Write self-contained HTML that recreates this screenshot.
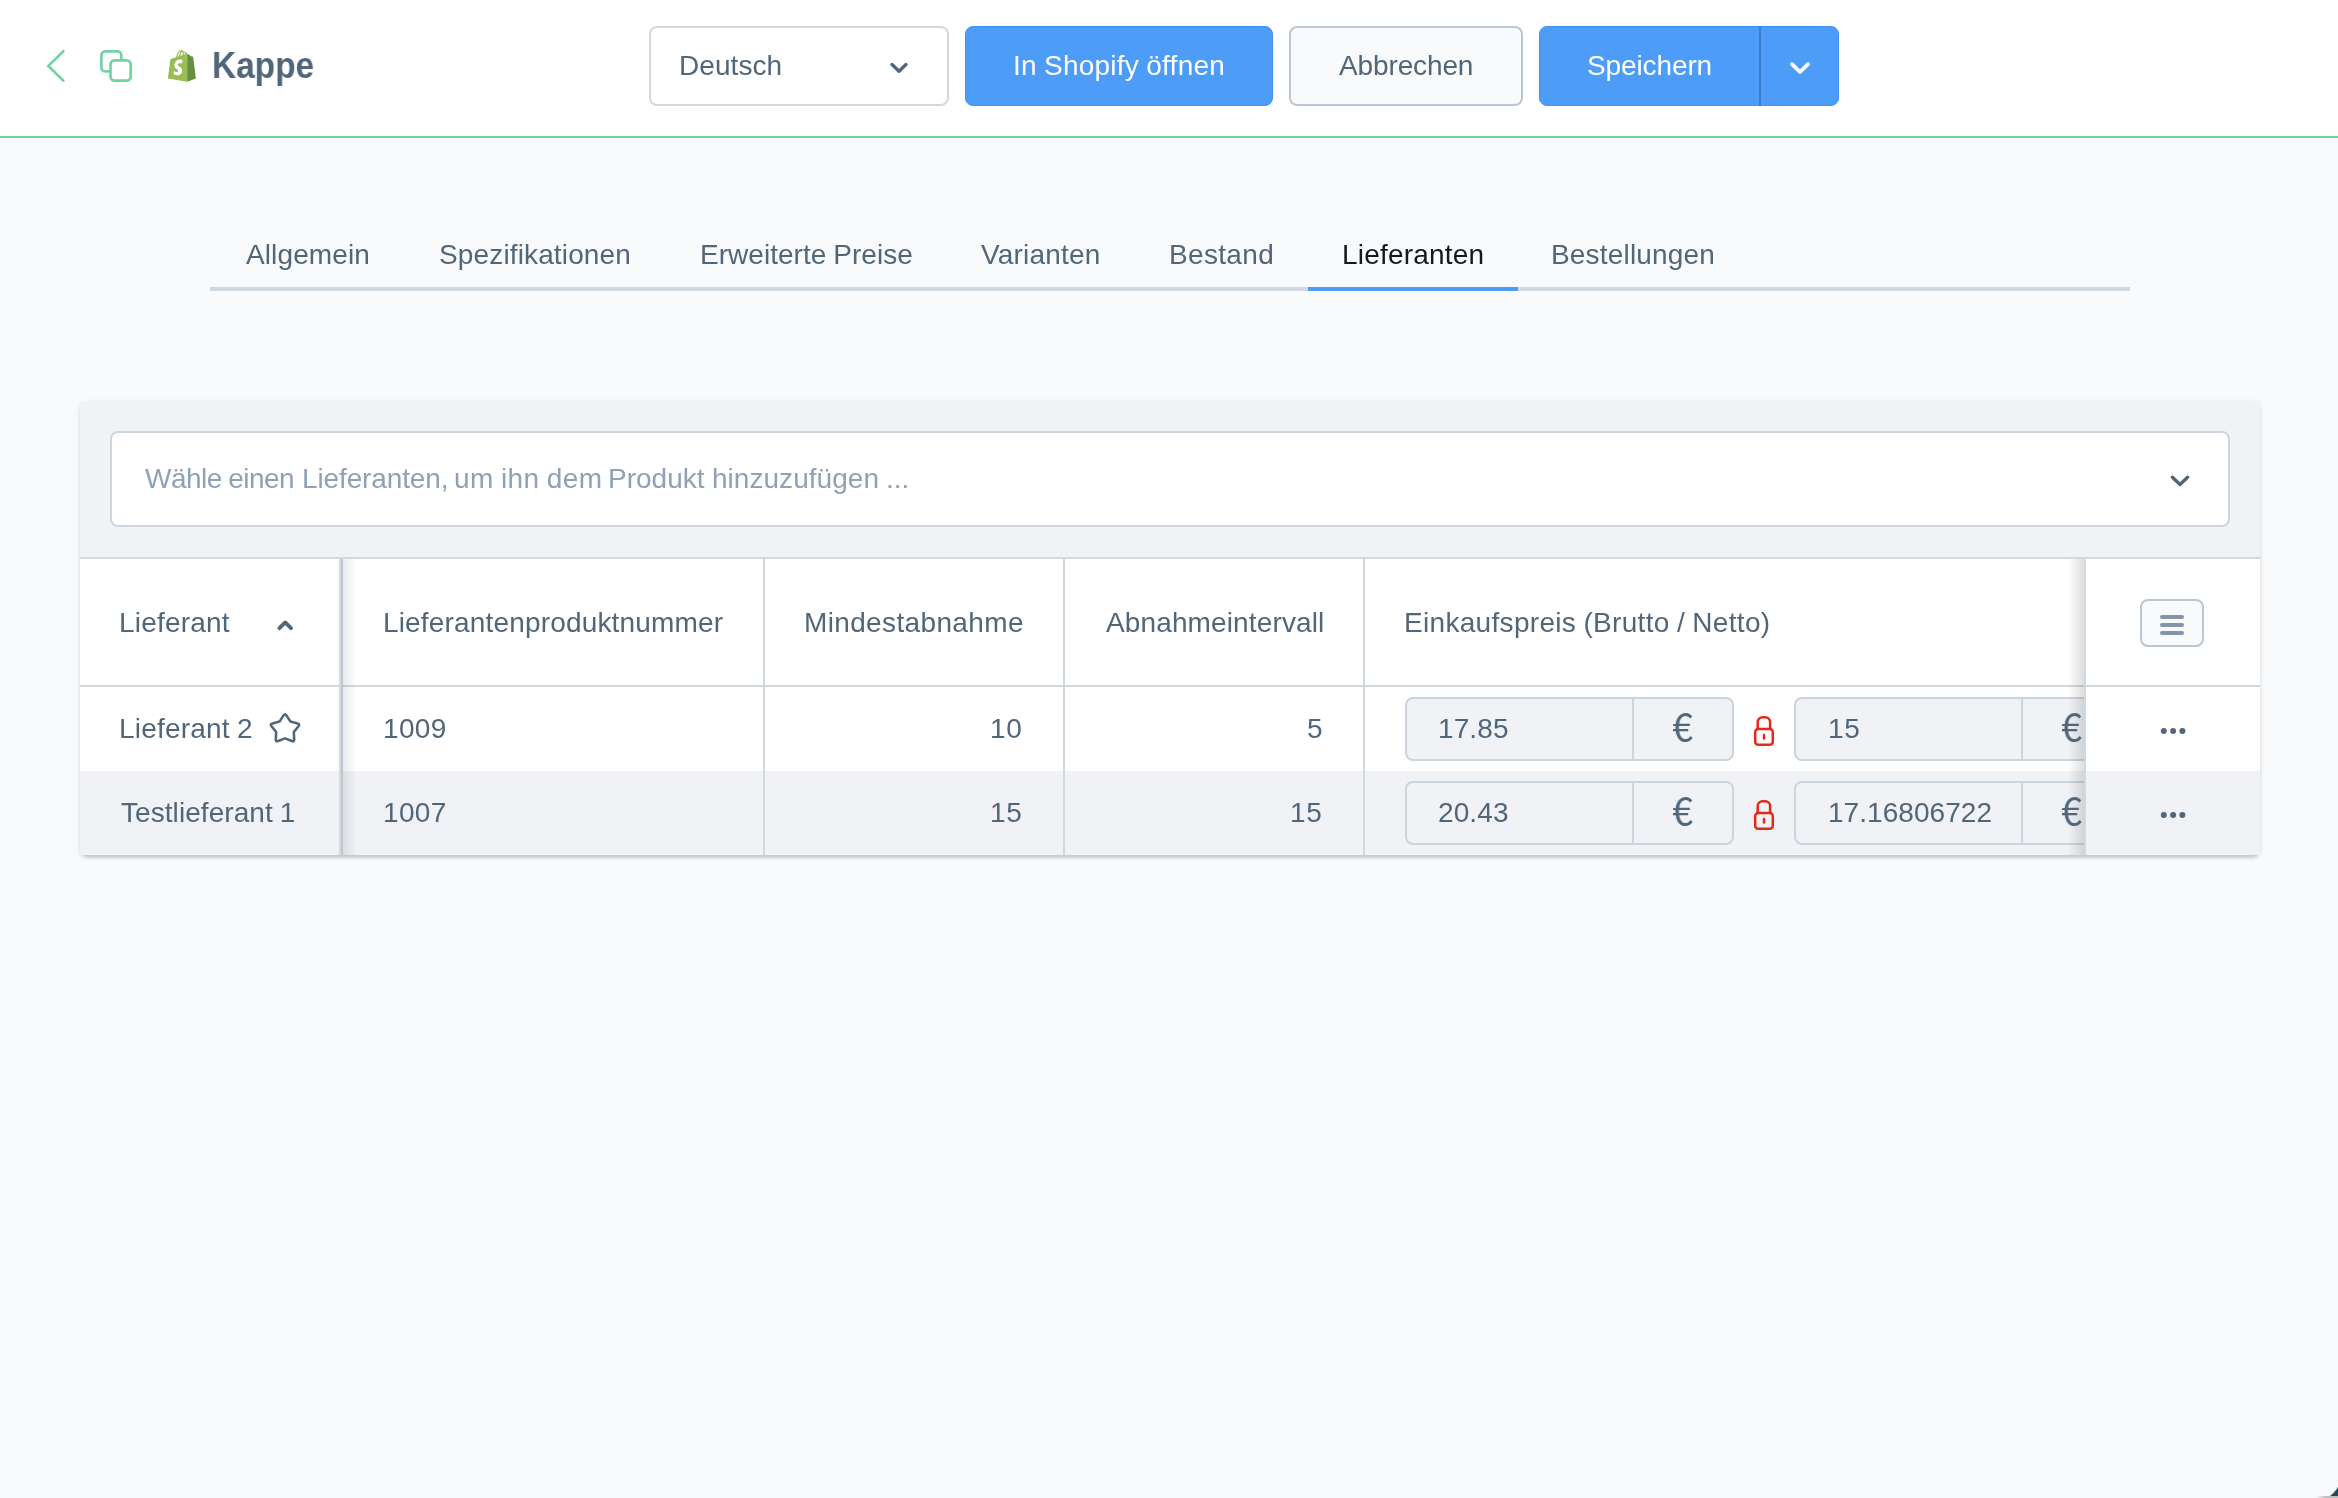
<!DOCTYPE html>
<html lang="de">
<head>
<meta charset="utf-8">
<title>Kappe – Lieferanten</title>
<style>
*{box-sizing:border-box;margin:0;padding:0}
html,body{width:2338px;height:1498px;overflow:hidden}
body{position:relative;background:#f9fafb;font-family:"Liberation Sans",sans-serif;font-size:28px;line-height:32px;color:#52667a;-webkit-font-smoothing:antialiased}
.abs{position:absolute}
.t{position:absolute;white-space:nowrap;line-height:32px;height:32px;will-change:transform;word-spacing:-.85px}
svg{position:absolute;overflow:visible}

/* header */
#hdr{left:0;top:0;width:2338px;height:136px;background:#fff}
#hdrline{left:0;top:136px;width:2338px;height:2px;background:#6fd19e}
#hdrline2{left:0;top:138px;width:2338px;height:1px;background:#fdfdfe}
.box{position:absolute;border:2px solid #d1d9e0;border-radius:8px;background:#fff}
.btn-blue{position:absolute;background:#4c9cf8;border:1px solid #3b94f6;border-radius:8px;color:#fff}
.btn-ghost{position:absolute;background:#f9fafb;border:2px solid #bcc6d2;border-radius:8px}
.white{color:#fff}

/* tabs */
#tabline{left:210px;top:287px;width:1920px;height:4px;background:#d1d9e0}
#tabactive{left:1308px;top:287px;width:210px;height:4px;background:#4c9cf8}

/* card */
#cardsh{left:80px;top:401px;width:2180px;height:454px;border-radius:8px;box-shadow:0 2px 2px rgba(0,0,0,.08),0 4px 2px rgba(0,0,0,.06),0 2px 6px rgba(0,0,0,.1)}
#card{left:80px;top:401px;width:2180px;height:454px;background:#fff;border-radius:0;overflow:hidden}
#card .in{position:absolute}
#toolbar{left:0;top:0;width:2180px;height:156px;background:#f0f2f5}
#toolbarline{left:0;top:156px;width:2180px;height:2px;background:#d1d9e0}
#headline{left:0;top:284px;width:2180px;height:2px;background:#d1d9e0}
#row2{left:0;top:370px;width:2180px;height:84px;background:#f0f2f5}
.vline{position:absolute;top:158px;height:296px;width:2px;background:#d1d9e0}
.grp{position:absolute;height:64px;width:329px;border:2px solid #ccd4dd;border-radius:8px;background:#f0f2f5}
.grp i{position:absolute;left:225px;top:0;width:2px;height:60px;background:#ccd4dd}
.eur{will-change:transform;position:absolute;font-family:"Noto Sans CJK SC","Liberation Sans",sans-serif;font-size:39.5px;line-height:44px;height:44px;white-space:nowrap;transform:scaleX(.95);transform-origin:0 0}
</style>
</head>
<body>

<!-- ===== header ===== -->
<div class="abs" id="hdr"></div>
<div class="abs" id="hdrline"></div>
<div class="abs" id="hdrline2"></div>

<!-- back chevron -->
<svg style="left:40px;top:44px" width="32" height="44" viewBox="40 44 32 44">
  <polyline points="63.4,51.2 48.3,65.9 63.4,80.7" fill="none" stroke="#74d3a3" stroke-width="2.6" stroke-linecap="round" stroke-linejoin="miter"/>
</svg>
<!-- duplicate icon -->
<svg style="left:96px;top:46px" width="40" height="40" viewBox="96 46 40 40">
  <rect x="101.4" y="51.4" width="20" height="20" rx="4" fill="none" stroke="#74d3a3" stroke-width="2.7"/>
  <rect x="110.5" y="60.4" width="20.2" height="20.2" rx="4" fill="#fff" stroke="#74d3a3" stroke-width="2.7"/>
</svg>
<!-- shopify bag -->
<svg style="left:167px;top:49px" width="30" height="34" viewBox="0 0 30 34">
  <path d="M9.2 8.2 C9.6 3.8 12.2 0.9 14.4 1.0 C15.6 1.0 16.3 1.9 16.6 2.6 C18.4 2.2 19.6 3.6 20.2 5.0 L20.2 32.8 L1.0 29.6 C1.0 29.6 3.0 13.4 3.2 11.6 C3.4 10.2 3.6 9.8 5.0 9.4 Z" fill="#99be56"/>
  <path d="M20.2 5.0 L21.6 5.2 L24.0 7.2 L25.6 7.4 C26.0 7.5 26.1 7.7 26.2 8.1 L28.9 29.4 L20.2 32.8 Z" fill="#648f45"/>
  <path d="M10.4 7.6 C10.8 4.6 12.6 2.4 14.2 2.3 C13.0 3.6 12.2 5.4 11.9 7.1 Z M13.4 6.7 C13.7 4.9 14.5 3.4 15.5 2.8 C15.9 3.6 16.0 4.9 15.9 5.9 Z M17.2 5.5 C17.2 4.8 17.1 4.0 16.9 3.4 C17.8 3.6 18.5 4.5 18.9 5.0 Z" fill="#fff"/>
  <path d="M15.6 11.4 L14.6 14.6 C14.6 14.6 13.6 14.1 12.4 14.2 C10.6 14.3 10.6 15.4 10.6 15.7 C10.7 17.3 14.9 17.6 15.1 21.3 C15.3 24.2 13.6 26.2 11.1 26.3 C8.1 26.5 6.5 24.7 6.5 24.7 L7.1 22.0 C7.1 22.0 8.7 23.3 10.0 23.2 C10.9 23.1 11.2 22.4 11.1 21.9 C11.0 19.8 7.6 19.9 7.4 16.5 C7.2 13.6 9.1 10.7 13.2 10.5 C14.8 10.4 15.6 11.4 15.6 11.4 Z" fill="#fff"/>
</svg>
<span class="t" id="t_title" style="left:211.6px;top:44px;font-size:37px;line-height:44px;height:44px;font-weight:bold;transform:scaleX(.903);transform-origin:0 0">Kappe</span>

<!-- language select -->
<div class="box" style="left:649px;top:26px;width:300px;height:80px"></div>
<span class="t" id="t_lang" style="left:679px;top:50px;letter-spacing:0.073px">Deutsch</span>
<svg style="left:886px;top:58px" width="26" height="20" viewBox="886 58 26 20">
  <polyline points="892,64.6 899,71.3 906,64.6" fill="none" stroke="#52667a" stroke-width="3.4" stroke-linecap="round" stroke-linejoin="round"/>
</svg>

<!-- open in shopify -->
<div class="btn-blue" style="left:965px;top:26px;width:308px;height:80px"></div>
<span class="t white" id="t_open" style="left:1013px;top:50px;letter-spacing:0.243px">In Shopify öffnen</span>

<!-- cancel -->
<div class="btn-ghost" style="left:1289px;top:26px;width:234px;height:80px"></div>
<span class="t" id="t_cancel" style="left:1339px;top:50px;letter-spacing:-0.125px">Abbrechen</span>

<!-- save split button -->
<div class="btn-blue" style="left:1539px;top:26px;width:300px;height:80px"></div>
<div class="abs" style="left:1759px;top:26px;width:2px;height:80px;background:#3a7dcd"></div>
<span class="t white" id="t_save" style="left:1587px;top:50px;letter-spacing:-0.115px">Speichern</span>
<svg style="left:1786px;top:58px" width="28" height="20" viewBox="1786 58 28 20">
  <polyline points="1792,64.2 1800,72 1808,64.2" fill="none" stroke="#fff" stroke-width="3.8" stroke-linecap="round" stroke-linejoin="round"/>
</svg>

<!-- ===== tabs ===== -->
<div class="abs" id="tabline"></div>
<div class="abs" id="tabactive"></div>
<span class="t" id="t_tab1" style="left:246px;top:239px;letter-spacing:0.110px">Allgemein</span>
<span class="t" id="t_tab2" style="left:439px;top:239px;letter-spacing:0.140px">Spezifikationen</span>
<span class="t" id="t_tab3" style="left:700px;top:239px;letter-spacing:0.031px">Erweiterte Preise</span>
<span class="t" id="t_tab4" style="left:981px;top:239px;letter-spacing:0.182px">Varianten</span>
<span class="t" id="t_tab5" style="left:1169px;top:239px;letter-spacing:0.333px">Bestand</span>
<span class="t" id="t_tab6" style="left:1342px;top:239px;color:#15181d;letter-spacing:0.200px">Lieferanten</span>
<span class="t" id="t_tab7" style="left:1551px;top:239px;letter-spacing:0.180px">Bestellungen</span>

<!-- ===== card ===== -->
<div class="abs" id="cardsh"></div>
<div class="abs" id="card">
  <div class="in" id="toolbar"></div>
  <div class="in" id="toolbarline"></div>
  <div class="in" id="row2"></div>
  <div class="in" id="headline"></div>
  <!-- column dividers -->
  <div class="vline" style="left:683px"></div>
  <div class="vline" style="left:983px"></div>
  <div class="vline" style="left:1283px"></div>
  <!-- sticky left column -->
  <div class="in" style="left:0;top:158px;width:259px;height:126px;background:#fff"></div>
  <div class="in" style="left:0;top:286px;width:259px;height:84px;background:#fff"></div>
  <div class="in" style="left:0;top:370px;width:259px;height:84px;background:#f0f2f5"></div>
  <div class="in" style="left:259px;top:158px;width:2px;height:296px;background:#d3dae2"></div>
  <div class="in" style="left:261px;top:158px;width:2px;height:296px;background:#bec7d0"></div>
  <div class="in" style="left:263px;top:158px;width:14px;height:296px;background:linear-gradient(to right,rgba(0,0,0,.085),rgba(0,0,0,0))"></div>
  <div class="in" style="left:0;top:284px;width:259px;height:2px;background:#d1d9e0"></div>

  <!-- price input groups -->
  <div class="grp" style="left:1325px;top:296px"><i></i></div>
  <div class="grp" style="left:1714px;top:296px"><i></i></div>
  <div class="grp" style="left:1325px;top:380px"><i></i></div>
  <div class="grp" style="left:1714px;top:380px"><i></i></div>

  <!-- sticky right (actions) column -->
  <div class="in" style="left:1988px;top:158px;width:16px;height:296px;background:linear-gradient(to right,rgba(0,0,0,0),rgba(0,0,0,.13))"></div>
  <div class="in" style="left:2004px;top:158px;width:176px;height:212px;background:#fff"></div>
  <div class="in" style="left:2004px;top:370px;width:176px;height:84px;background:#f0f2f5"></div>
  <div class="in" style="left:2004px;top:158px;width:2px;height:296px;background:#d1d9e0"></div>
  <div class="in" style="left:2004px;top:284px;width:176px;height:2px;background:#d1d9e0"></div>
</div>

<!-- supplier select -->
<div class="box" style="left:110px;top:431px;width:2120px;height:96px;border-color:#cdd5de"></div>
<span class="t" id="t_ph1" style="left:145px;top:463px;color:#8fa1b6;letter-spacing:-0.520px">Wähle einen</span>
<span class="t" id="t_ph2" style="left:302px;top:463px;color:#8fa1b6;letter-spacing:-0.124px">Lieferanten,</span>
<span class="t" id="t_ph3" style="left:454px;top:463px;color:#8fa1b6;letter-spacing:0.382px">um ihn dem</span>
<span class="t" id="t_ph4" style="left:608px;top:463px;color:#8fa1b6">Produkt</span>
<span class="t" id="t_ph5" style="left:712px;top:463px;color:#8fa1b6;letter-spacing:0.037px">hinzuzufügen ...</span>
<svg style="left:2166px;top:470px" width="26" height="20" viewBox="2166 470 26 20">
  <polyline points="2172.4,477.2 2180,484.4 2187.6,477.2" fill="none" stroke="#52667a" stroke-width="3.4" stroke-linecap="round" stroke-linejoin="round"/>
</svg>

<!-- table header texts -->
<span class="t" id="t_h1" style="left:119px;top:607px;letter-spacing:0.188px">Lieferant</span>
<svg style="left:274px;top:616px" width="22" height="18" viewBox="274 616 22 18">
  <polyline points="279.4,628.2 285.2,622.4 291,628.2" fill="none" stroke="#52667a" stroke-width="3.8" stroke-linecap="round" stroke-linejoin="round"/>
</svg>
<span class="t" id="t_h2" style="left:383px;top:607px;letter-spacing:0.166px">Lieferantenproduktnummer</span>
<span class="t" id="t_h3" style="left:804px;top:607px;letter-spacing:0.358px">Mindestabnahme</span>
<span class="t" id="t_h4" style="left:1106px;top:607px;letter-spacing:0.130px">Abnahmeintervall</span>
<span class="t" id="t_h5" style="left:1404px;top:607px;letter-spacing:0.316px">Einkaufspreis (Brutto / Netto)</span>

<!-- column settings button -->
<div class="btn-ghost" style="left:2140px;top:599px;width:64px;height:48px"></div>
<svg style="left:2156px;top:611px" width="32" height="28" viewBox="2156 611 32 28">
  <g stroke="#8594aa" stroke-width="4" stroke-linecap="round">
    <line x1="2162" y1="617" x2="2182" y2="617"/>
    <line x1="2162" y1="625" x2="2182" y2="625"/>
    <line x1="2162" y1="633" x2="2182" y2="633"/>
  </g>
</svg>

<!-- row 1 -->
<span class="t" id="t_r1c1" style="left:119px;top:713px;letter-spacing:0.200px">Lieferant 2</span>
<svg style="left:266px;top:710px" width="38" height="36" viewBox="266 710 38 36">
  <path d="M283.6 715.4 Q285.0 713.2 286.4 715.4 L290.5 721.6 L297.6 723.5 Q300.1 724.2 298.5 726.2 L293.8 732.0 L294.2 739.4 Q294.3 742.0 291.9 741.0 L285.0 738.4 L278.1 741.0 Q275.7 742.0 275.8 739.4 L276.2 732.0 L271.5 726.2 Q269.9 724.2 272.4 723.5 L279.5 721.6 Z" fill="none" stroke="#52667a" stroke-width="2.6" stroke-linejoin="round"/>
</svg>
<span class="t" id="t_r1c2" style="left:383px;top:713px;letter-spacing:0.337px">1009</span>
<span class="t" id="t_r1c3" style="left:990px;top:713px;letter-spacing:0.600px">10</span>
<span class="t" id="t_r1c4" style="left:1307px;top:713px">5</span>
<span class="t" id="t_r1p1" style="left:1438px;top:713px;letter-spacing:0.115px">17.85</span>
<span class="eur" id="t_r1e1" style="left:1672.4px;top:703px">€</span>
<span class="t" id="t_r1p2" style="left:1828px;top:713px;letter-spacing:0.600px">15</span>
<span class="eur" id="t_r1e2" style="left:2061.4px;top:703px;width:23.8px;overflow:hidden">€</span>

<!-- row 2 -->
<span class="t" id="t_r2c1" style="left:121px;top:797px;letter-spacing:0.064px">Testlieferant 1</span>
<span class="t" id="t_r2c2" style="left:383px;top:797px;letter-spacing:0.337px">1007</span>
<span class="t" id="t_r2c3" style="left:990px;top:797px;letter-spacing:0.600px">15</span>
<span class="t" id="t_r2c4" style="left:1290px;top:797px;letter-spacing:0.600px">15</span>
<span class="t" id="t_r2p1" style="left:1438px;top:797px;letter-spacing:0.115px">20.43</span>
<span class="eur" id="t_r2e1" style="left:1672.4px;top:787px">€</span>
<span class="t" id="t_r2p2" style="left:1828px;top:797px;letter-spacing:0.050px">17.16806722</span>
<span class="eur" id="t_r2e2" style="left:2061.4px;top:787px;width:23.8px;overflow:hidden">€</span>

<!-- lock icons -->
<svg style="left:1750px;top:712px" width="28" height="38" viewBox="1750 712 28 38">
  <g fill="none" stroke="#e4291b" stroke-width="2.5" stroke-linecap="round" stroke-linejoin="round">
    <rect x="1755.2" y="729" width="17.6" height="15.8" rx="3"/>
    <path d="M1757.7 729 V722.2 A5 5 0 0 1 1762.7 717.2 H1765.1 A5 5 0 0 1 1770.1 722.2 V729"/>
    <line x1="1764" y1="735" x2="1764" y2="738.6"/>
  </g>
</svg>
<svg style="left:1750px;top:796px" width="28" height="38" viewBox="1750 796 28 38">
  <g fill="none" stroke="#e4291b" stroke-width="2.5" stroke-linecap="round" stroke-linejoin="round">
    <rect x="1755.2" y="813" width="17.6" height="15.8" rx="3"/>
    <path d="M1757.7 813 V806.2 A5 5 0 0 1 1762.7 801.2 H1765.1 A5 5 0 0 1 1770.1 806.2 V813"/>
    <line x1="1764" y1="819" x2="1764" y2="822.6"/>
  </g>
</svg>

<!-- row action dots -->
<svg style="left:2158px;top:726px" width="30" height="10" viewBox="2158 726 30 10">
  <g fill="#52667a"><circle cx="2163.8" cy="731" r="3"/><circle cx="2173.1" cy="731" r="3"/><circle cx="2182.4" cy="731" r="3"/></g>
</svg>
<svg style="left:2158px;top:810px" width="30" height="10" viewBox="2158 810 30 10">
  <g fill="#52667a"><circle cx="2163.8" cy="815" r="3"/><circle cx="2173.1" cy="815" r="3"/><circle cx="2182.4" cy="815" r="3"/></g>
</svg>

<!-- window corner -->
<div class="abs" style="left:2312px;top:1472px;width:26px;height:26px;background:radial-gradient(circle at 0 0,rgba(31,74,88,0) 29.4px,#1f4a58 30.6px)"></div>
<div class="abs" style="left:2316px;top:1495.5px;width:22px;height:2.5px;background:linear-gradient(to right,rgba(189,189,189,0),#bdbdbd 45%)"></div>

</body>
</html>
